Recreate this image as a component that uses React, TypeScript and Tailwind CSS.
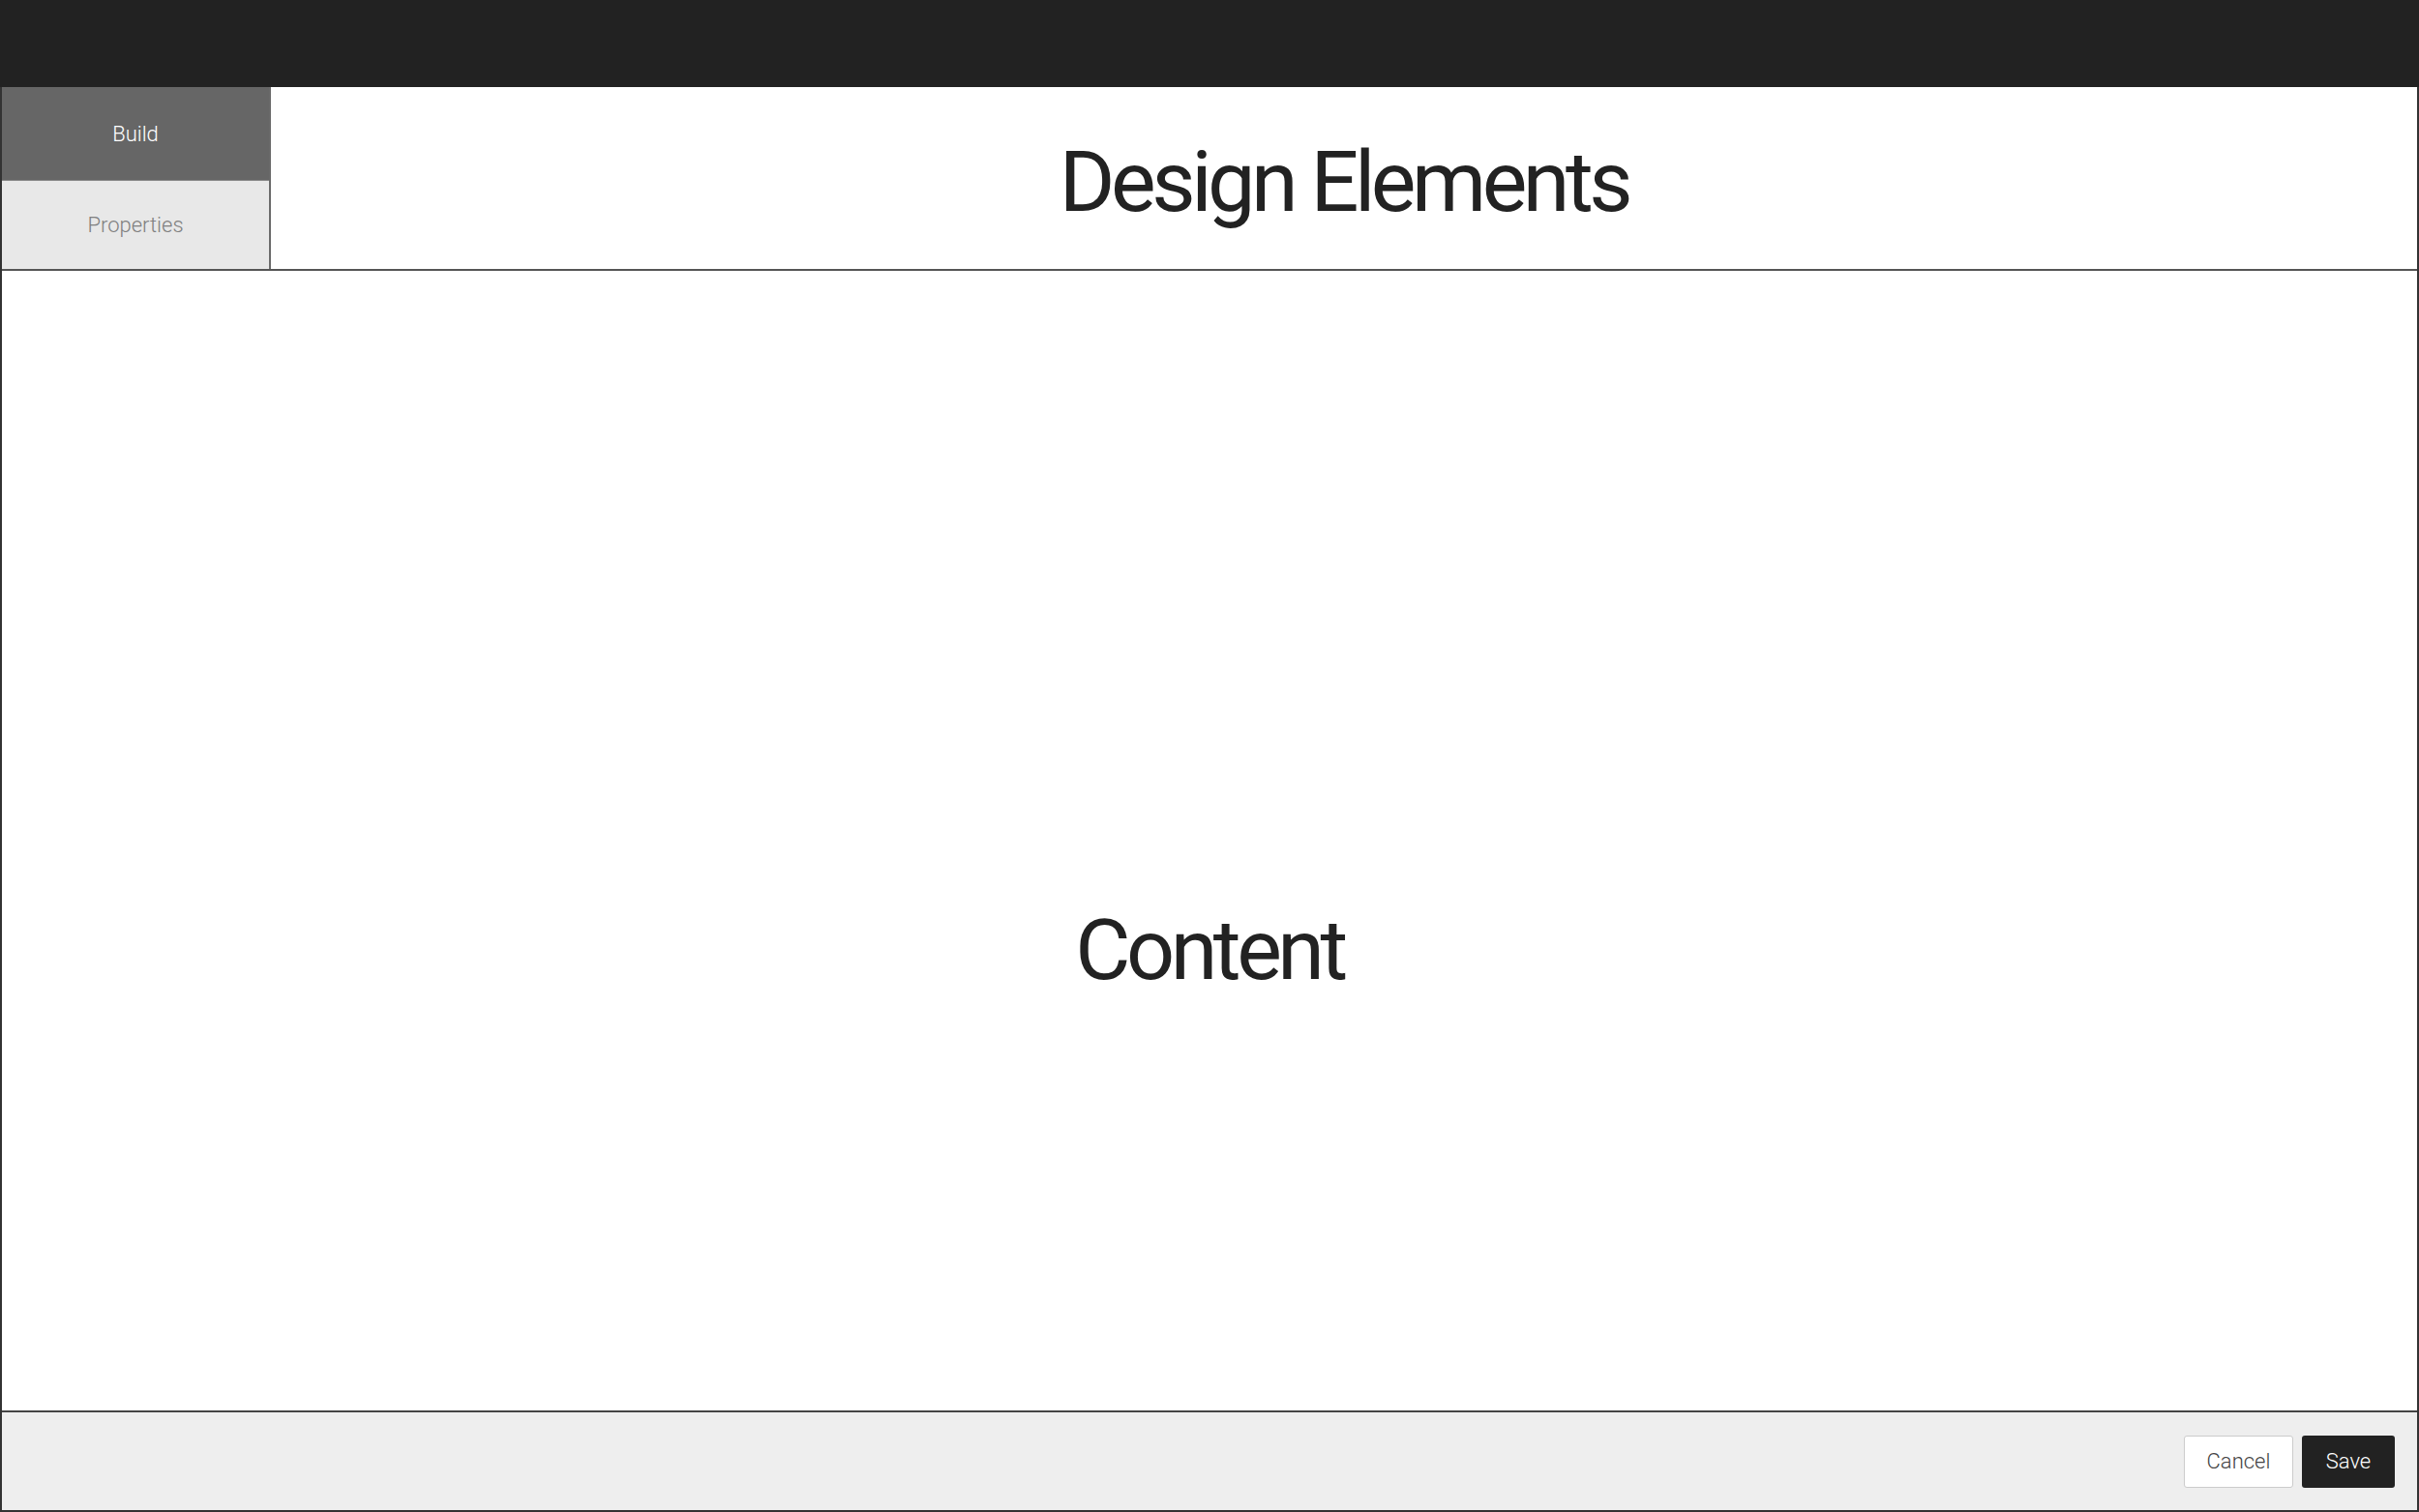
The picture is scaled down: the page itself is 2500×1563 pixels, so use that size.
export default function App() {
  return (
    <div className="flex h-[1563px] w-[2500px] flex-col bg-white font-['Roboto',sans-serif]">
      {/* top bar */}
      <div className="h-[90px] shrink-0 bg-[#222222]" />

      <div className="flex min-h-0 flex-1 flex-col border-2 border-t-0 border-[#333333]">
        {/* header row */}
        <div className="flex h-[190px] shrink-0 border-b-2 border-[#555555]">
          <div className="flex w-[278px] shrink-0 flex-col border-r-2 border-[#6a6a6a]">
            <button className="flex h-[97px] items-center justify-center border-b border-[#888888] bg-[#666666] text-[22px] font-light text-white">
              Build
            </button>
            <button className="flex flex-1 items-center justify-center bg-[#e8e8e8] text-[22px] font-light text-[#808080]">
              Properties
            </button>
          </div>
          <div className="flex flex-1 items-center justify-center pt-[8px]">
            <h1 className="text-[88px] leading-none font-normal tracking-[-4.5px] text-[#222222]">
              Design Elements
            </h1>
          </div>
        </div>

        {/* content */}
        <div className="flex min-h-0 flex-1 items-center justify-center pt-[226px]">
          <p className="text-[88px] leading-none tracking-[-4.5px] text-[#222222]">Content</p>
        </div>

        {/* footer */}
        <div className="flex h-[103px] shrink-0 items-center justify-end gap-[9px] border-t-2 border-[#444444] bg-[#eeeeee] pr-[23px]">
          <button className="h-[54px] w-[113px] rounded-[3px] border border-[#cccccc] bg-white text-[22px] font-light text-[#444444]">
            Cancel
          </button>
          <button className="h-[54px] w-[96px] rounded-[3px] bg-[#222222] text-[22px] font-light text-white">
            Save
          </button>
        </div>
      </div>
    </div>
  );
}
